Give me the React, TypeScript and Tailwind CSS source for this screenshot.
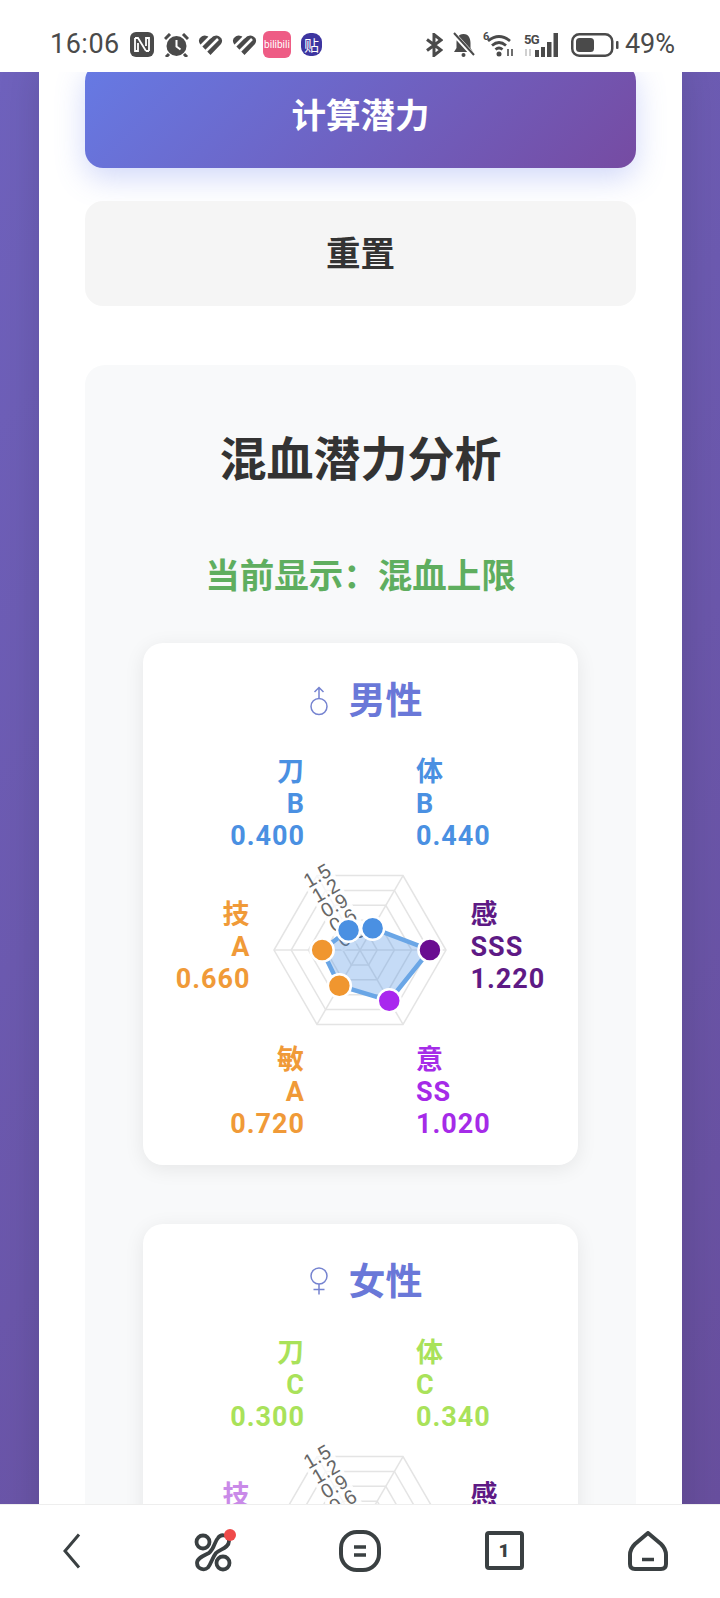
import React from "react";

const AXES = [-120, -60, 0, 60, 120, 180];
const R = 86;
const CX = 109;
const CY = 96;

const pt = (deg: number, r: number) => {
  const a = (deg * Math.PI) / 180;
  return [CX + r * Math.cos(a), CY + r * Math.sin(a)];
};
const ring = (r: number) => AXES.map((d) => pt(d, r).join(",")).join(" ");

type Point = { value: number; color: string };

const Radar = ({ points }: { points: Point[] }) => {
  const coords = points.map((p, i) => pt(AXES[i], (p.value / 1.5) * R));
  return (
    <svg width="220" height="188" viewBox="0 0 220 188" className="shrink-0 overflow-visible">
      {[1, 0.8, 0.6, 0.4, 0.2].map((k) => (
        <polygon key={k} points={ring(R * k)} fill="none" stroke="#e4e4e4" strokeWidth="1.5" />
      ))}
      {AXES.map((d) => {
        const [x, y] = pt(d, R);
        return <line key={d} x1={CX} y1={CY} x2={x} y2={y} stroke="#e4e4e4" strokeWidth="1.5" />;
      })}
      {["0.3", "0.6", "0.9", "1.2", "1.5"].map((t, i) => {
        const [x, y] = pt(-120, (R * (i + 1)) / 5);
        return (
          <g key={t} transform={`translate(${x} ${y}) rotate(-30)`}>
            <rect x="-16" y="-10" width="32" height="20" fill="#ffffff" fillOpacity="0.65" />
            <text
              textAnchor="middle"
              dominantBaseline="central"
              fontSize="20"
              fill="#666666"
              fontFamily="'Liberation Sans', sans-serif"
            >
              {t}
            </text>
          </g>
        );
      })}
      {points.length > 0 && (
        <polygon
          points={coords.map((c) => c.join(",")).join(" ")}
          fill="#4a90e2"
          fillOpacity="0.32"
          stroke="#6aa6e6"
          strokeWidth="4.5"
        />
      )}
      {coords.map(([x, y], i) => (
        <circle key={i} cx={x} cy={y} r="11.5" fill={points[i].color} stroke="#ffffff" strokeWidth="2.5" />
      ))}
    </svg>
  );
};

const Label = ({ lines, color, right }: { lines: string[]; color: string; right?: boolean }) => (
  <div
    className={`w-[110px] h-[98px] shrink-0 text-[27px] leading-[32px] tracking-[1px] font-bold font-['Roboto','Noto_Sans_CJK_SC',sans-serif] ${right ? "text-right" : "text-left"}`}
    style={{ color }}
  >
    {lines.map((l) => (
      <div key={l}>{l}</div>
    ))}
  </div>
);

type Stat = { lines: string[]; color: string };

const GenderCard = ({
  icon,
  title,
  stats,
  points,
}: {
  icon: React.ReactNode;
  title: string;
  stats: Stat[];
  points: Point[];
}) => (
  <div className="bg-white rounded-[20px] shadow-[0_4px_20px_rgba(0,0,0,0.08)] pt-[35px] pb-[23px] flex flex-col items-center">
    <div className="h-[46px] flex items-center text-[37px] font-bold text-[#6a78d8]">
      {icon}
      <span>{title}</span>
    </div>
    <div className="mt-[32px] flex justify-center gap-[111px]">
      <Label {...stats[0]} right />
      <Label {...stats[1]} />
    </div>
    <div className="h-[188px] flex items-center justify-center">
      <Label {...stats[5]} right />
      <Radar points={points} />
      <Label {...stats[2]} />
    </div>
    <div className="mt-[2px] flex justify-center gap-[111px]">
      <Label {...stats[4]} right />
      <Label {...stats[3]} />
    </div>
  </div>
);

const MaleIcon = () => (
  <svg width="18" height="30" viewBox="0 0 18 30" fill="none" stroke="#7583d0" strokeWidth="1.5" className="ml-[11px] mr-[21px]">
    <circle cx="9" cy="20.5" r="8" />
    <path d="M9 12.5V1.5M4.5 6L9 1.5 13.5 6" />
  </svg>
);

const FemaleIcon = () => (
  <svg width="18" height="28" viewBox="0 0 18 28" fill="none" stroke="#7583d0" strokeWidth="1.5" className="ml-[11px] mr-[21px] -mt-[3px]">
    <circle cx="9" cy="9" r="8" />
    <path d="M9 17V27.5M3.5 22.5h11" />
  </svg>
);

const BLUE = "#4a90e2";
const ORANGE = "#f09a38";
const DARK = "#5e1a85";
const PURPLE = "#a52be8";
const LIME = "#a9e25a";
const LILAC = "#c98ae8";

const male: Stat[] = [
  { lines: ["刀", "B", "0.400"], color: BLUE },
  { lines: ["体", "B", "0.440"], color: BLUE },
  { lines: ["感", "SSS", "1.220"], color: DARK },
  { lines: ["意", "SS", "1.020"], color: PURPLE },
  { lines: ["敏", "A", "0.720"], color: ORANGE },
  { lines: ["技", "A", "0.660"], color: ORANGE },
];

const malePoints: Point[] = [
  { value: 0.4, color: "#4a90e2" },
  { value: 0.44, color: "#4a90e2" },
  { value: 1.22, color: "#6a0d91" },
  { value: 1.02, color: "#a928ee" },
  { value: 0.72, color: "#f0962f" },
  { value: 0.66, color: "#f0962f" },
];

const female: Stat[] = [
  { lines: ["刀", "C", "0.300"], color: LIME },
  { lines: ["体", "C", "0.340"], color: LIME },
  { lines: ["感"], color: DARK },
  { lines: [], color: LIME },
  { lines: [], color: LIME },
  { lines: ["技"], color: LILAC },
];

const StatusBar = () => (
  <div className="h-[72px] shrink-0 bg-white flex items-center pl-[50px] pr-[45px] pt-[17px] justify-between text-[#4a4a4a] font-['Roboto',sans-serif]">
    <div className="flex items-center">
      <span className="text-[27px] font-normal tracking-[0.5px] w-[80px]">16:06</span>
      <svg width="24" height="25" viewBox="0 0 24 25">
        <rect width="24" height="25" rx="6" fill="#4a4a4a" />
        <path d="M5 6h3l8 13M5 6v13h3V11M19 19h-3M19 19V6h-3v8" fill="none" stroke="#fff" strokeWidth="1.8" />
      </svg>
      <svg width="25" height="24" viewBox="0 0 25 24" className="ml-[10px]">
        <circle cx="12.5" cy="13" r="10" fill="#4a4a4a" />
        <path d="M12.5 7v6.5l4 3" fill="none" stroke="#fff" strokeWidth="2" />
        <path d="M1 6l5-5M24 6l-5-5M5 21l-3 3M20 21l3 3" stroke="#4a4a4a" strokeWidth="3" />
      </svg>
      {[0, 1].map((i) => (
        <svg key={i} width="25" height="20" viewBox="0 0 25 20" className="ml-[9px]">
          <path d="M12.5 20L2 9Q-1 4 4 1.2Q8.5-.8 12.5 3.5Q16.5-.8 21 1.2Q26 4 23 9Z" fill="#4a4a4a" />
          <path d="M3 11L13 1M8 16L20 4" stroke="#fff" strokeWidth="2.6" />
        </svg>
      ))}
      <div className="ml-[6px] w-[28px] h-[27px] rounded-[6px] bg-[#ee5c85] flex items-center justify-center text-white text-[10px] leading-none">
        bilibili
      </div>
      <div className="ml-[10px] w-[21px] h-[23px] rounded-[9px] bg-[#3d35a0] flex items-center justify-center text-white text-[15px] leading-none font-['Noto_Sans_CJK_SC',sans-serif]">
        贴
      </div>
    </div>
    <div className="flex items-center">
      <svg width="18" height="24" viewBox="0 0 18 24" fill="none" stroke="#4a4a4a" strokeWidth="3">
        <path d="M2 6.5L16 17L9 22.5V1.5L16 7L2 17.5" />
      </svg>
      <svg width="23" height="25" viewBox="0 0 23 25" className="ml-[9px]">
        <path d="M11.5 2C6 2 4.5 7 4.5 11v5L2 20h19l-2.5-4v-5C18.5 7 17 2 11.5 2Z" fill="#4a4a4a" />
        <circle cx="11.5" cy="23" r="2" fill="#4a4a4a" />
        <path d="M1 1L21 23" stroke="#fff" strokeWidth="4.5" />
        <path d="M2 1L22 23" stroke="#4a4a4a" strokeWidth="2" />
      </svg>
      <div className="relative ml-[8px] w-[33px] h-[24px]">
        <span className="absolute left-0 top-[-2px] text-[11px] font-bold leading-none">6</span>
        <svg width="33" height="24" viewBox="0 0 33 24" fill="none" stroke="#4a4a4a" strokeWidth="2.8">
          <path d="M5 8Q16-1 27 8M9 12.5Q16 6.5 23 12.5M12.5 16.5Q16 13.5 19.5 16.5" />
          <circle cx="16" cy="21" r="2.5" fill="#4a4a4a" stroke="none" />
          <path d="M25 16v7M29 16v7" strokeWidth="1.6" />
        </svg>
      </div>
      <div className="relative ml-[8px] w-[39px] h-[24px]">
        <span className="absolute left-0 top-0 text-[13px] font-bold leading-none tracking-[-0.5px]">5G</span>
        <svg width="39" height="24" viewBox="0 0 39 24" fill="#4a4a4a">
          <path d="M2 16v7M6 16v7" stroke="#bdbdbd" strokeWidth="1.4" />
          <rect x="11" y="17" width="4" height="7" />
          <rect x="17" y="14" width="4" height="10" />
          <rect x="23" y="9" width="4.5" height="15" />
          <rect x="29.5" y="0" width="4.5" height="24" />
        </svg>
      </div>
      <svg width="48" height="24" viewBox="0 0 48 24" className="ml-[8px]">
        <rect x="1.25" y="1.25" width="40" height="21.5" rx="7" fill="none" stroke="#4a4a4a" strokeWidth="2.5" />
        <rect x="5" y="5" width="18" height="14" rx="3.5" fill="#4a4a4a" />
        <rect x="45" y="8" width="2.5" height="8" rx="1" fill="#4a4a4a" />
      </svg>
      <span className="ml-[6px] text-[27px] font-normal">49%</span>
    </div>
  </div>
);

const BottomNav = () => (
  <div className="h-[94px] shrink-0 bg-white border-t-[1.5px] border-[#eeeeee] grid grid-cols-5 items-center justify-items-center pb-[2px]">
    <svg width="20" height="36" viewBox="0 0 20 36" fill="none" stroke="#3a4042" strokeWidth="3">
      <path d="M17 1.5L3 18l14 16.5" />
    </svg>
    <svg width="44" height="44" viewBox="0 0 44 44" fill="none" stroke="#3a4042" strokeWidth="3.8">
      <circle cx="9" cy="13" r="6.5" />
      <circle cx="29" cy="34" r="6.5" />
      <path d="M3 34a6.5 6.5 0 0 0 11 4.5C17 35 18 29 22 24C26 20 35 19 35 12A6 6 0 0 0 24 9C20 13 21 19 15 24C9 27 3 29 3 34Z" />
      <circle cx="36" cy="6" r="6" fill="#ef4a4a" stroke="none" />
    </svg>
    <svg width="42" height="42" viewBox="0 0 42 42" fill="none" stroke="#3a4042" strokeWidth="4">
      <rect x="2" y="2" width="38" height="38" rx="16" />
      <path d="M15 17h12M15 25h12" strokeWidth="3.5" />
    </svg>
    <div className="w-[39px] h-[39px] border-[4px] border-[#3a4042] rounded-[4px] flex items-center justify-center text-[#3a4042] text-[19px] font-black leading-none font-['Roboto',sans-serif]">
      1
    </div>
    <svg width="40" height="40" viewBox="0 0 40 40" fill="none" stroke="#3a4042" strokeWidth="4" strokeLinejoin="round">
      <path d="M20 2L33 13Q38 18 38 24V33Q38 38 33 38H7Q2 38 2 33V24Q2 18 7 13Z" />
      <path d="M14 28.5h12" strokeWidth="3.5" />
    </svg>
  </div>
);

export default function App() {
  return (
    <div className="h-[1598px] flex flex-col overflow-hidden bg-white font-['Inter','Noto_Sans_CJK_SC',sans-serif]">
      <StatusBar />
      <main className="flex-1 min-h-0 overflow-hidden pl-[39px] pr-[38px] bg-[linear-gradient(135deg,#6f62bd,#684f9e)]">
        <div className="-mt-[9px] bg-white px-[46px] shadow-[0_0_40px_rgba(0,0,0,0.14)] pb-[40px]">
          <button className="w-full h-[105px] rounded-[18px] bg-[linear-gradient(135deg,#667ae4,#764ba2)] text-white text-[34.5px] font-bold shadow-[0_10px_30px_rgba(102,126,234,0.3)]">
            计算潜力
          </button>
          <button className="mt-[33px] w-full h-[105px] rounded-[18px] bg-[#f5f5f5] text-[#333333] text-[34.5px] font-bold">
            重置
          </button>
          <section className="mt-[59px] bg-[#f8f9fa] rounded-[20px] px-[58px] pt-[64px] pb-[40px]">
            <h2 className="h-[60px] leading-[60px] text-center text-[47px] font-bold text-[#333333]">混血潜力分析</h2>
            <p className="mt-[63px] h-[48px] leading-[48px] text-center text-[34.5px] font-bold text-[#5fae5f]">
              当前显示：混血上限
            </p>
            <div className="mt-[43px] flex flex-col gap-[59px]">
              <GenderCard icon={<MaleIcon />} title="男性" stats={male} points={malePoints} />
              <GenderCard icon={<FemaleIcon />} title="女性" stats={female} points={[]} />
            </div>
          </section>
        </div>
      </main>
      <BottomNav />
    </div>
  );
}
